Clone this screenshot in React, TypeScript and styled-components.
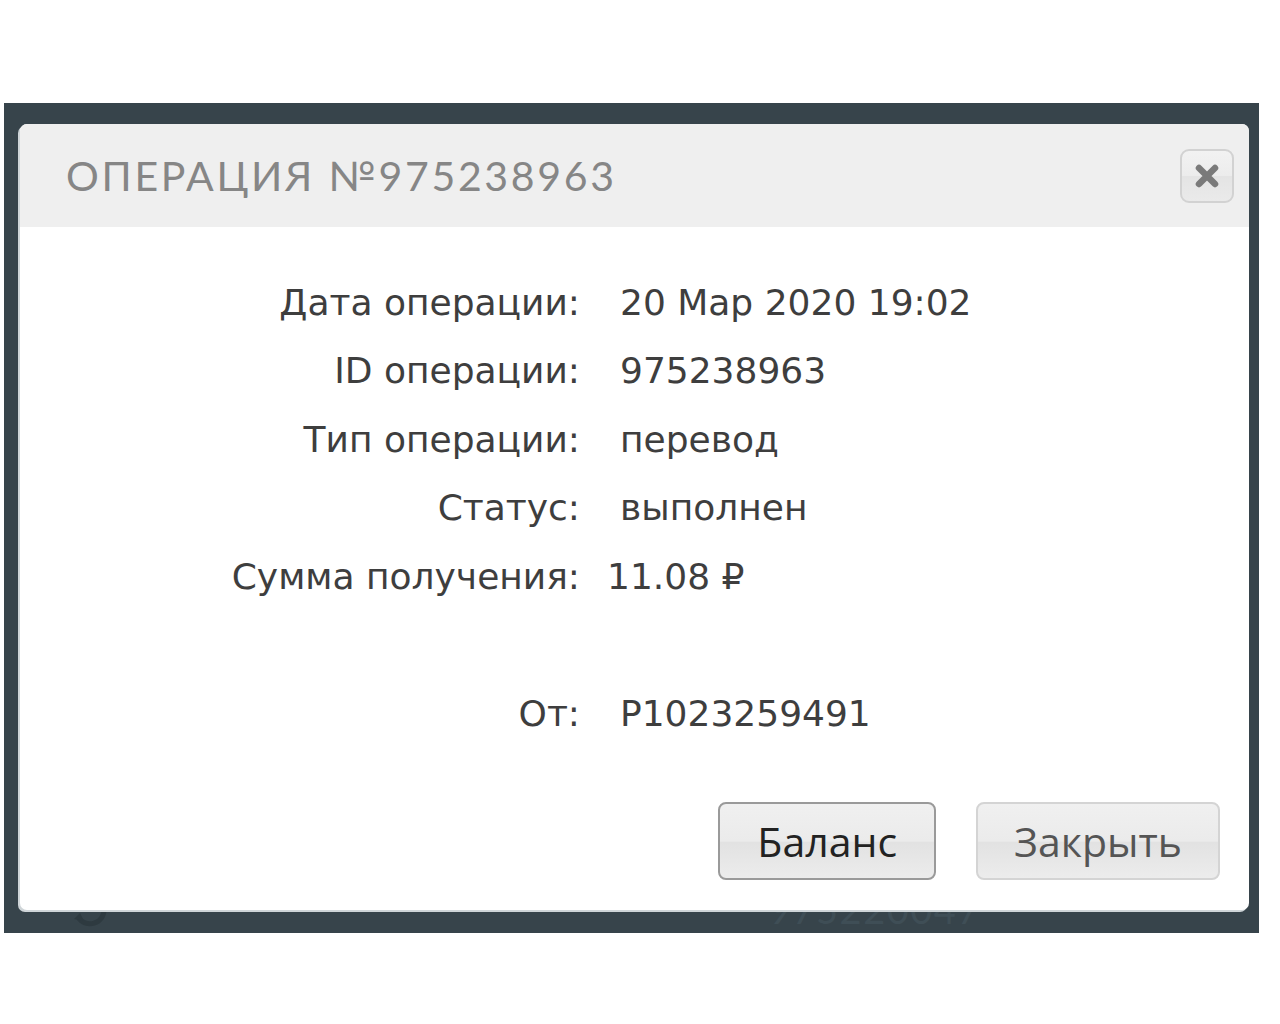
import React from 'react';
import styled, { createGlobalStyle } from 'styled-components';

const GlobalStyle = createGlobalStyle`
  body {
    margin: 0;
    background: #ffffff;
    font-family: 'Noto Sans', 'Open Sans', sans-serif;
  }
`;

const Page = styled.div`
  width: 1280px;
  height: 1024px;
  padding-top: 103px;
  padding-left: 4px;
  box-sizing: border-box;
`;

const Backdrop = styled.div`
  position: relative;
  width: 1255px;
  height: 830px;
  background: #37444b;
  padding: 21px 10px 0 16px;
  box-sizing: border-box;
  overflow: hidden;
`;

const Behind = styled.div`
  position: absolute;
  left: 62px;
  top: 782px;
  display: flex;
  align-items: center;
  color: #3f4e56;
  font-family: 'Lato', sans-serif;
  font-size: 38px;
  letter-spacing: 1.5px;
`;

const Ghost = styled.span`
  margin-left: 655px;
`;

const Modal = styled.div`
  position: relative;
  z-index: 1;
  width: 1229px;
  height: 786px;
  background: #ffffff;
  border-radius: 7px;
  box-shadow: -2px 2px 0 #cfd5d8;
  overflow: hidden;
  display: flex;
  flex-direction: column;
`;

const Header = styled.div`
  height: 103px;
  background: #efefef;
  display: flex;
  align-items: center;
  justify-content: space-between;
  padding: 0 15px 0 46px;
  box-sizing: border-box;
`;

const Title = styled.h1`
  margin: 0;
  font-family: 'Lato', 'Noto Sans', sans-serif;
  font-weight: 400;
  font-size: 41px;
  letter-spacing: 2.7px;
  color: #868686;
`;

const CloseIcon = styled.button`
  width: 54px;
  height: 54px;
  border: 2px solid #d2d2d2;
  border-radius: 9px;
  background: linear-gradient(#f2f2f2 0%, #ececec 50%, #e4e4e4 51%, #eaeaea 100%);
  display: flex;
  align-items: center;
  justify-content: center;
  padding: 0;
`;

const Body = styled.div`
  flex: 1;
  display: flex;
  flex-direction: column;
  padding: 41px 29px 30px 0;
`;

const Details = styled.div`
  display: grid;
  grid-template-columns: 560px 1fr;
  column-gap: 40px;
  grid-auto-rows: 68.5px;
  align-items: center;
  color: #3e3e3e;
  font-family: 'DejaVu Sans', sans-serif;
  font-size: 36px;
`;

const Label = styled.div`
  text-align: right;
`;

const Value = styled.div<{ $shift?: number }>`
  margin-left: ${(p) => p.$shift ?? 0}px;
`;

const Actions = styled.div`
  margin-top: auto;
  display: flex;
  justify-content: flex-end;
  gap: 40px;
`;

const Button = styled.button<{ $primary?: boolean }>`
  height: 78px;
  padding: 0 ${(p) => (p.$primary ? 37 : 36)}px;
  border-radius: 8px;
  border: 2px solid ${(p) => (p.$primary ? '#9a9a9a' : '#d4d4d4')};
  background: linear-gradient(#f0f0f0 0%, #ebebeb 50%, #e2e2e2 52%, #ececec 100%);
  color: ${(p) => (p.$primary ? '#222' : '#555')};
  font-family: 'Open Sans', sans-serif;
  font-size: 41px;
  cursor: pointer;
`;

const rows: [string, string, number?][] = [
  ['Дата операции:', '20 Мар 2020 19:02'],
  ['ID операции:', '975238963'],
  ['Тип операции:', 'перевод'],
  ['Статус:', 'выполнен'],
  ['Сумма получения:', '11.08 ₽', -13],
  ['', ''],
  ['От:', 'P1023259491'],
];

export default function App() {
  return (
    <Page>
      <GlobalStyle />
      <Backdrop>
        <Modal>
          <Header>
            <Title>ОПЕРАЦИЯ №975238963</Title>
            <CloseIcon aria-label="close">
              <svg width="26" height="26" viewBox="0 0 26 26">
                <path d="M5 5 L21 21 M21 5 L5 21" stroke="#7a7a7a" strokeWidth="6.5" strokeLinecap="round" />
              </svg>
            </CloseIcon>
          </Header>
          <Body>
            <Details>
              {rows.map(([label, value, shift], i) => (
                <React.Fragment key={i}>
                  <Label>{label}</Label>
                  <Value $shift={shift}>{value}</Value>
                </React.Fragment>
              ))}
            </Details>
            <Actions>
              <Button $primary>Баланс</Button>
              <Button>Закрыть</Button>
            </Actions>
          </Body>
        </Modal>
        <Behind>
          <svg width="48" height="48" viewBox="0 0 48 48">
            <path d="M10 24 A14 14 0 0 1 36 16 M38 24 A14 14 0 0 1 12 32" stroke="#2e3a40" strokeWidth="5" fill="none" />
            <path d="M8 34 L14 28 L18 36 Z" fill="#2e3a40" />
          </svg>
          <Ghost>975220047</Ghost>
        </Behind>
      </Backdrop>
    </Page>
  );
}
